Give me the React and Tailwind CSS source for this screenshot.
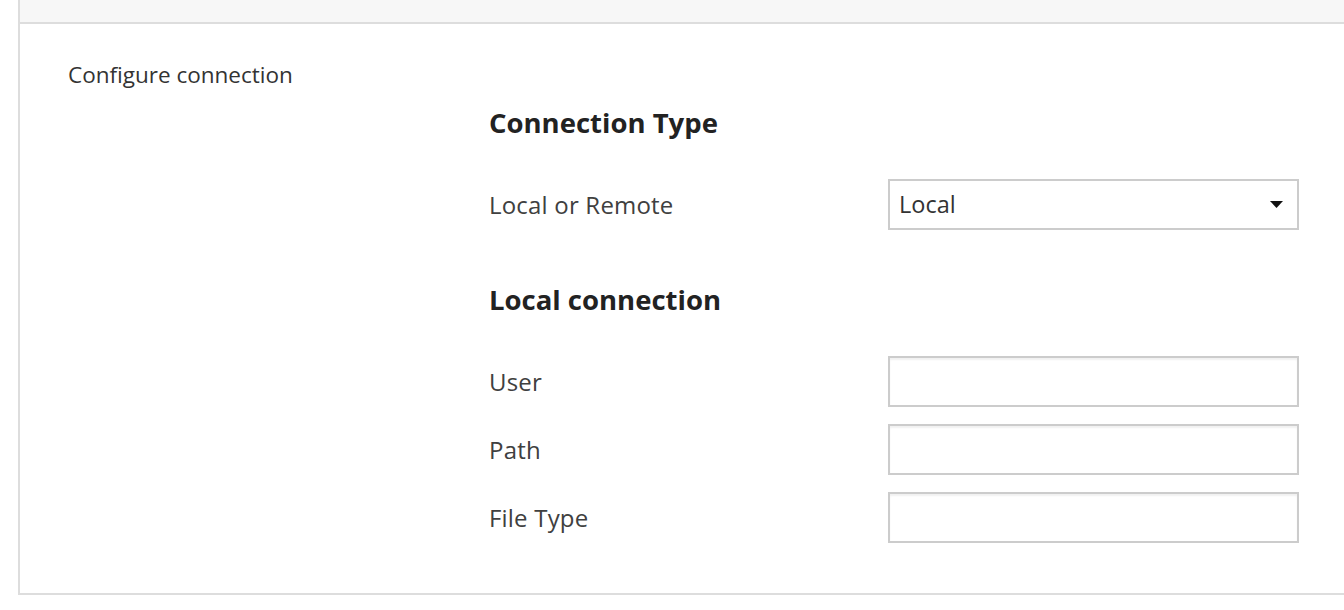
import React from 'react';

const font = { fontFamily: '"Open Sans", "Noto Sans", sans-serif' };

function Row({ label, children }) {
  return (
    <div className="flex items-center h-[51px]">
      <div className="w-[399px] text-[24px] tracking-[0.2px] text-[#404040]">{label}</div>
      {children}
    </div>
  );
}

function TextBox() {
  return (
    <input
      type="text"
      className="w-[411px] h-[51px] border-2 border-[#cccccc] bg-white shadow-[inset_0_2px_2px_rgba(0,0,0,0.06)] outline-none px-[10px] text-[22px]"
    />
  );
}

export default function App() {
  return (
    <div className="min-h-[610px] bg-white" style={font}>
      <div className="ml-[18px] border-l-2 border-b-2 border-[#dddddd]">
        <div className="h-[24px] bg-[#f7f7f7] border-b-2 border-[#dddddd]" />
        <div className="pl-[48px] pt-[36px] pb-[50px]">
          <div className="h-[30px] leading-[30px] text-[22.5px] text-[#333333]">Configure connection</div>
          <div className="ml-[421px] mt-[13px]">
            <h2 className="h-[40px] leading-[40px] text-[27.5px] font-bold text-[#222222]">Connection Type</h2>
            <div className="mt-[36px]">
              <Row label="Local or Remote">
                <div className="w-[411px] h-[51px] border-2 border-[#cccccc] bg-white flex items-center justify-between pl-[9px] pr-[14px]">
                  <span className="text-[23.5px] text-[#333333]">Local</span>
                  <svg width="13" height="7" viewBox="0 0 13 7">
                    <path d="M0 0h13L6.5 7z" fill="#111" />
                  </svg>
                </div>
              </Row>
            </div>
            <h2 className="mt-[50px] h-[40px] leading-[40px] text-[27.5px] font-bold text-[#222222]">Local connection</h2>
            <div className="mt-[36px] flex flex-col gap-[17px]">
              <Row label="User"><TextBox /></Row>
              <Row label="Path"><TextBox /></Row>
              <Row label="File Type"><TextBox /></Row>
            </div>
          </div>
        </div>
      </div>
    </div>
  );
}
